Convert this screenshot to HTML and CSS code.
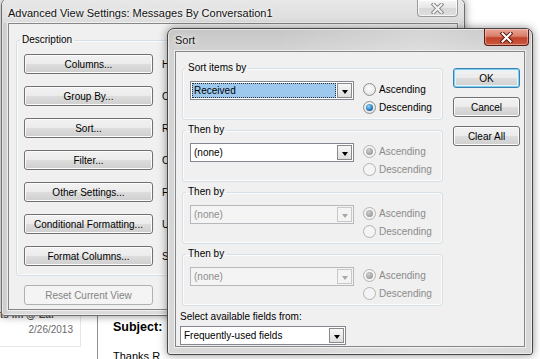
FILE: index.html
```html
<!DOCTYPE html>
<html lang="en">
<head>
  <meta charset="UTF-8" />
  <meta name="viewport" content="width=device-width, initial-scale=1.0"/>
  <title>Sort</title>
  <link rel="stylesheet" href="styles.css">
</head>
<body>
  <!-- Outlook window behind the dialogs -->
  <div class="outlook">
    <div class="msg-list">
      <div class="msg-cell">
        <div class="msg-from">ts im @ Ear</div>
        <div class="msg-date">2/26/2013</div>
      </div>
    </div>
    <div class="reading">
      <div class="subject">Subject:</div>
      <div class="reading-body">Thanks R</div>
    </div>
  </div>

  <!-- Advanced View Settings (inactive) -->
  <div class="window back">
    <div class="titlebar">
      <span class="title">Advanced View Settings: Messages By Conversation1</span>
      <span class="close">
        <svg width="13" height="11" viewBox="0 0 13 11">
          <path d="M2.5 1.5 L10.5 9.5 M10.5 1.5 L2.5 9.5" stroke="#8a8a8a" stroke-width="4" stroke-linecap="square"/>
          <path d="M2.5 1.5 L10.5 9.5 M10.5 1.5 L2.5 9.5" stroke="#f2f2f2" stroke-width="2" stroke-linecap="square"/>
        </svg>
      </span>
    </div>
    <div class="client">
      <!-- only the first letter of each description shows past the Sort dialog -->
      <fieldset class="group desc">
        <legend>Description</legend>
        <div class="desc-row"><button class="btn wide">Columns...</button><span>H</span></div>
        <div class="desc-row"><button class="btn wide">Group By...</button><span>C</span></div>
        <div class="desc-row"><button class="btn wide">Sort...</button><span>R</span></div>
        <div class="desc-row"><button class="btn wide">Filter...</button><span>C</span></div>
        <div class="desc-row"><button class="btn wide">Other Settings...</button><span>F</span></div>
        <div class="desc-row"><button class="btn wide">Conditional Formatting...</button><span>U</span></div>
        <div class="desc-row"><button class="btn wide">Format Columns...</button><span>S</span></div>
      </fieldset>
      <button class="btn wide reset" disabled>Reset Current View</button>
    </div>
  </div>

  <!-- Sort dialog (active) -->
  <div class="window sort">
    <div class="titlebar">
      <span class="title">Sort</span>
      <span class="close active">
        <svg width="13" height="11" viewBox="0 0 13 11">
          <path d="M2.5 1.5 L10.5 9.5 M10.5 1.5 L2.5 9.5" stroke="#5a160b" stroke-width="4" stroke-linecap="square"/>
          <path d="M2.5 1.5 L10.5 9.5 M10.5 1.5 L2.5 9.5" stroke="#ffffff" stroke-width="2" stroke-linecap="square"/>
        </svg>
      </span>
    </div>
    <div class="client">
      <div class="sort-main">
        <div class="groups">
          <fieldset class="group grp">
            <legend>Sort items by</legend>
            <div class="grp-row">
              <div class="combo"><span class="val sel">Received</span><span class="drop"></span></div>
              <div class="radios">
                <div class="radio"><i></i>Ascending</div>
                <div class="radio"><i class="on"></i>Descending</div>
              </div>
            </div>
          </fieldset>
          <fieldset class="group grp">
            <legend>Then by</legend>
            <div class="grp-row">
              <div class="combo"><span class="val">(none)</span><span class="drop"></span></div>
              <div class="radios off">
                <div class="radio"><i class="on"></i>Ascending</div>
                <div class="radio"><i></i>Descending</div>
              </div>
            </div>
          </fieldset>
          <fieldset class="group grp">
            <legend>Then by</legend>
            <div class="grp-row">
              <div class="combo off"><span class="val">(none)</span><span class="drop"></span></div>
              <div class="radios off">
                <div class="radio"><i class="on"></i>Ascending</div>
                <div class="radio"><i></i>Descending</div>
              </div>
            </div>
          </fieldset>
          <fieldset class="group grp">
            <legend>Then by</legend>
            <div class="grp-row">
              <div class="combo off"><span class="val">(none)</span><span class="drop"></span></div>
              <div class="radios off">
                <div class="radio"><i class="on"></i>Ascending</div>
                <div class="radio"><i></i>Descending</div>
              </div>
            </div>
          </fieldset>
        </div>
        <div class="actions">
          <button class="btn small default">OK</button>
          <button class="btn small">Cancel</button>
          <button class="btn small">Clear All</button>
        </div>
      </div>
      <div class="fields-from">
        <div class="label">Select available fields from:</div>
        <div class="combo fields"><span class="val">Frequently-used fields</span><span class="drop"></span></div>
      </div>
    </div>
  </div>
</body>
</html>
```

FILE: styles.css
```css
/* Basic resets & layout */
* {
  box-sizing: border-box;
}

body {
  margin: 0;
  width: 540px;
  height: 359px;
  overflow: hidden;
  position: relative;
  background: #fff;
  font-family: 'Segoe UI', 'Liberation Sans', Arial, sans-serif;
  font-size: 10px;
  color: #000;
}

/* Outlook behind */
.outlook {
  position: absolute;
  left: 0;
  top: 312px;
  width: 170px;
  height: 47px;
  display: flex;
}

.msg-list {
  width: 98px;
  border-right: 1px solid #8f8f8f;
}

.msg-cell {
  width: 81px;
  height: 38px;
  border-right: 1px solid #e6e6e6;
  border-bottom: 1px solid #e6e6e6;
}

.msg-from {
  margin-top: -3px;
  line-height: 12px;
  color: #555;
  font-weight: bold;
}

.msg-date {
  margin-top: 3px;
  padding-right: 7px;
  text-align: right;
  line-height: 12px;
  color: #6a6a6a;
}

.reading {
  padding-left: 15px;
}

.subject {
  margin-top: 8px;
  font-size: 12.5px;
  font-weight: bold;
  line-height: 15px;
}

.reading-body {
  margin-top: 15px;
  font-size: 11px;
  line-height: 13px;
}

/* Windows 7 style frames */
.window {
  position: absolute;
  display: flex;
  flex-direction: column;
  border: 1px solid #6e6e6e;
  border-radius: 7px 7px 3px 3px;
  box-shadow: inset 0 0 0 1px rgba(255, 255, 255, 0.55), 0 0 9px rgba(0, 0, 0, 0.45);
  overflow: hidden;
}

.back {
  left: 1px;
  top: -2px;
  width: 464px;
  height: 318px;
  background: linear-gradient(90deg, #c9c9c9 0, #dadada 8px, #dedede 100%);
}

.back .titlebar {
  background: linear-gradient(180deg, #e8e8e8 0, #dcdcdc 100%);
}

.sort {
  left: 167px;
  top: 28px;
  width: 366px;
  height: 327px;
  border-color: #474747;
  background: linear-gradient(90deg, rgba(255, 255, 255, 0) 30%, rgba(255, 255, 255, 0.25) 70%, rgba(255, 255, 255, 0) 100%),
              linear-gradient(180deg, #c6c6c6 0, #d3d3d3 22px, #d8d8d8 100%);
}

.titlebar {
  display: flex;
  align-items: flex-start;
  flex: none;
}

.back .titlebar {
  height: 24px;
  padding-left: 6px;
}

.sort .titlebar {
  height: 22px;
  padding-left: 7px;
}

.title {
  line-height: 14px;
  font-size: 11px;
  color: #111;
  text-shadow: 0 0 6px #fff, 0 0 3px #fff;
  white-space: nowrap;
}

.back .title {
  margin-top: 7px;
}

.sort .title {
  margin-top: 4px;
}

.close {
  margin-left: auto;
  display: flex;
  align-items: center;
  justify-content: center;
  border: 1px solid #9a9a9a;
  border-top: none;
  border-radius: 0 0 4px 4px;
}

.back .close {
  width: 41px;
  height: 17px;
  margin-top: 1px;
  margin-right: 6px;
  background: linear-gradient(180deg, #f6f6f6 0, #e6e6e6 50%, #d8d8d8 50%, #dedede 100%);
  box-shadow: inset 0 0 0 1px rgba(255, 255, 255, 0.7);
}

.close.active {
  width: 45px;
  height: 17px;
  margin-right: 3px;
  border-color: #5b1c12;
  background: linear-gradient(180deg, #e9a595 0, #d9806b 45%, #c2422a 55%, #c95a3f 100%);
  box-shadow: inset 0 0 0 1px rgba(255, 220, 210, 0.45);
}

.client {
  flex: 1;
  background: #f0f0f0;
  border: 1px solid #868686;
  box-shadow: 0 0 0 1px rgba(255, 255, 255, 0.6);
}

.back .client {
  margin: 0 6px 5px;
}

.sort .client {
  margin: 0 7px 7px;
}

/* Group boxes */
.group {
  margin: 0;
  min-width: 0;
  border: 1px solid #d5dfe5;
  border-radius: 3px;
  box-shadow: inset 0 0 0 1px #fbfbfb;
}

.group legend {
  margin-left: -4px;
  padding: 0 2px;
  line-height: 12px;
  font-size: 10px;
}

/* right part of this box lies under the Sort dialog */
.desc {
  width: 153px;
  margin: 10px 0 0 7px;
  padding: 8px 0 9px 7px;
}

.desc-row {
  display: flex;
  align-items: center;
  gap: 9px;
  white-space: nowrap;
}

.desc-row + .desc-row {
  margin-top: 12px;
}

/* Buttons */
.btn {
  height: 20px;
  padding: 0;
  font: inherit;
  color: #000;
  border: 1px solid #707070;
  border-radius: 3px;
  background: linear-gradient(180deg, #f2f2f2 0%, #ebebeb 50%, #dddddd 50%, #cfcfcf 100%);
  box-shadow: inset 0 0 0 1px #fcfcfc;
  text-align: center;
  flex: none;
}

.btn.wide {
  width: 129px;
}

.btn.small {
  width: 67px;
}

.btn.default {
  border-color: #3c7fb1;
  box-shadow: inset 0 0 0 1px #7fd0f2, inset 0 0 0 2px #e3f4fc;
}

.btn:disabled {
  border-color: #adb2b5;
  background: #f4f4f4;
  color: #838383;
  box-shadow: none;
}

.reset {
  margin: 9px 0 0 15px;
}

/* Sort dialog body */
.sort-main {
  display: flex;
  padding: 10px 0 0 6px;
}

.grp {
  width: 261px;
  padding: 6px 10px 3px 7px;
}

.grp + .grp {
  margin-top: 4px;
}

.grp-row {
  display: flex;
  align-items: flex-start;
}

.actions {
  display: flex;
  flex-direction: column;
  gap: 9px;
  margin: 6px 0 0 10px;
}

/* Combo boxes */
.combo {
  width: 164px;
  height: 19px;
  margin-top: 1px;
  display: flex;
  align-items: center;
  padding: 1px;
  background: #fff;
  border: 1px solid #828790;
}

.combo .val {
  flex: 1;
  align-self: stretch;
  margin-right: 1px;
  padding-left: 2px;
  line-height: 15px;
  white-space: nowrap;
}

.combo .val.sel {
  background: #9dc9ef;
  outline: 1px dotted #2a2a2a;
  outline-offset: -1px;
}

.combo .drop {
  width: 15px;
  height: 15px;
  display: flex;
  align-items: center;
  justify-content: center;
  border: 1px solid #8a8a8a;
  background: linear-gradient(180deg, #f7f7f7, #dedede);
}

.combo .drop::after {
  content: '';
  margin-top: 2px;
  border-left: 3.5px solid transparent;
  border-right: 3.5px solid transparent;
  border-top: 4px solid #000;
}

.combo.off {
  background: #f4f4f4;
  border-color: #b5b8bc;
  color: #8d8d8d;
}

.combo.off .drop {
  border-color: #c8c8c8;
  background: #f4f4f4;
}

.combo.off .drop::after {
  border-top-color: #a8a8a8;
}

/* Radio buttons */
.radios {
  margin-left: 9px;
}

.radio {
  height: 18px;
  display: flex;
  align-items: center;
  gap: 3px;
  white-space: nowrap;
}

.radio i {
  width: 13px;
  height: 13px;
  border-radius: 50%;
  border: 1px solid #8e8f8f;
  background: radial-gradient(circle at 50% 40%, #ffffff 0, #e6e6e6 70%, #d2d2d2 100%);
  display: flex;
  align-items: center;
  justify-content: center;
}

.radio i.on::after {
  content: '';
  width: 7px;
  height: 7px;
  border-radius: 50%;
  background: radial-gradient(circle at 40% 35%, #9ad8fb 0, #2a7fc4 55%, #0e3d70 100%);
}

.radios.off .radio {
  color: #8b8b8b;
}

.radios.off .radio i {
  border-color: #b3b3b3;
  background: #f4f4f4;
}

.radios.off .radio i.on::after {
  background: radial-gradient(circle at 40% 35%, #d0d0d0 0, #9c9c9c 70%);
}

/* Bottom field selector */
.fields-from {
  padding: 5px 0 0 4px;
}

.fields-from .label {
  line-height: 12px;
}

.combo.fields {
  width: 166px;
  margin-top: 3px;
}
```
